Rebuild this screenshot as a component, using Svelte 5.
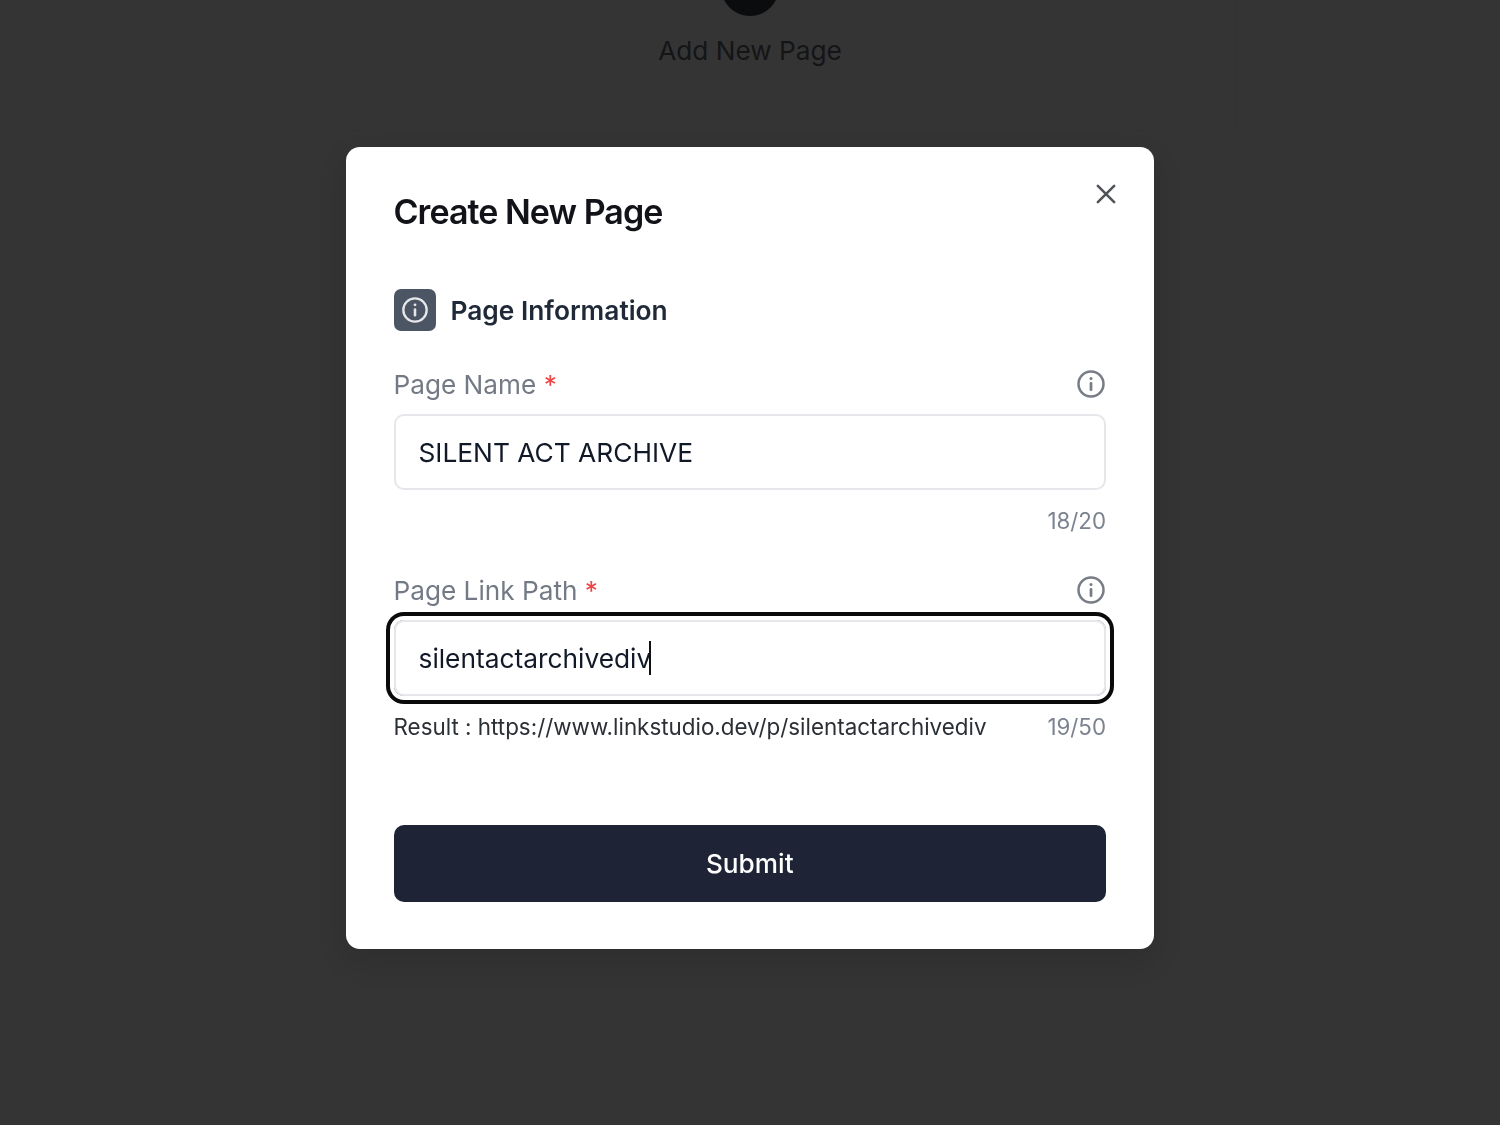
<script>
    const fields = [
        { label: 'Page Name', value: 'SILENT ACT ARCHIVE', count: '18/20', focused: false, result: '' },
        { label: 'Page Link Path', value: 'silentactarchivediv', count: '19/50', focused: true, result: 'Result : https://www.linkstudio.dev/p/silentactarchivediv' }
    ];
</script>

<div class="page">
    <div class="panel">
        <div class="add-circle"></div>
        <span class="add-label">Add New Page</span>
    </div>
</div>

<div class="overlay">
    <div class="modal">
        <button class="close" aria-label="Close">
            <svg viewBox="0 0 24 24" width="28" height="28" fill="none" stroke="currentColor" stroke-width="2.2" stroke-linecap="round">
                <path d="M5 5l14 14M19 5L5 19" />
            </svg>
        </button>

        <h2>Create New Page</h2>

        <div class="section">
            <span class="section-icon">
                <svg viewBox="0 0 24 24" width="28" height="28" fill="none" stroke="currentColor" stroke-width="2" stroke-linecap="round">
                    <circle cx="12" cy="12" r="10" />
                    <path d="M12 11.5v5" stroke-width="2.2" />
                    <circle cx="12" cy="7.6" r="1.2" fill="currentColor" stroke="none" />
                </svg>
            </span>
            <h3>Page Information</h3>
        </div>

        {#each fields as field}
            <div class="field">
                <div class="label-row">
                    <span class="label">{field.label} <span class="req">*</span></span>
                    <svg class="hint" viewBox="0 0 24 24" width="30" height="30" fill="none" stroke="currentColor" stroke-width="2" stroke-linecap="round">
                        <circle cx="12" cy="12" r="10" />
                        <path d="M12 11.5v5" stroke-width="2.2" />
                        <circle cx="12" cy="7.6" r="1.2" fill="currentColor" stroke="none" />
                    </svg>
                </div>
                <div class="input" class:focused={field.focused}>
                    {field.value}{#if field.focused}<span class="caret"></span>{/if}
                </div>
                <div class="meta">
                    <span class="result">{field.result}</span>
                    <span class="count">{field.count}</span>
                </div>
            </div>
        {/each}

        <button class="submit">Submit</button>
    </div>
</div>

<style>
    :global(body) {
        margin: 0;
        background: #343434;
        font-family: Inter, "Liberation Sans", sans-serif;
    }

    .page {
        height: 1125px;
        background: #343434;
        overflow: hidden;
    }

    .panel {
        width: 970px;
        height: 130px;
        margin: 0 auto;
        display: flex;
        flex-direction: column;
        align-items: center;
        box-shadow: 0 0 3px rgba(0, 0, 0, 0.05);
    }

    .add-circle {
        width: 58px;
        height: 58px;
        margin-top: -42px;
        border-radius: 50%;
        background: #0b0c0e;
        flex-shrink: 0;
    }

    .add-label {
        margin-top: 19px;
        font-size: 26.2px;
        line-height: 32px;
        color: #141517;
    }

    .overlay {
        position: fixed;
        inset: 0;
        display: flex;
        justify-content: center;
        align-items: flex-start;
    }

    .modal {
        position: relative;
        box-sizing: border-box;
        width: 808px;
        height: 802px;
        margin-top: 147px;
        padding: 47px 48px 47px 47.5px;
        background: #fff;
        border-radius: 14px;
        box-shadow: 0 12px 30px rgba(0, 0, 0, 0.12);
        display: flex;
        flex-direction: column;
    }

    .close {
        position: absolute;
        top: 33px;
        right: 34px;
        padding: 0;
        border: 0;
        background: none;
        color: #505459;
        display: flex;
    }

    h2 {
        margin: 0;
        font-size: 34px;
        line-height: 36px;
        font-weight: 600;
        letter-spacing: -0.95px;
        color: #111318;
    }

    .section {
        display: flex;
        align-items: center;
        gap: 15px;
        margin-top: 59px;
    }

    .section-icon {
        width: 42px;
        height: 42px;
        border-radius: 7px;
        background: #4b5563;
        color: #e5e7eb;
        display: flex;
        align-items: center;
        justify-content: center;
    }

    h3 {
        margin: 2px 0 0;
        font-size: 26.3px;
        line-height: 40px;
        font-weight: 600;
        color: #1f2937;
    }

    .field {
        display: flex;
        flex-direction: column;
    }

    .section + .field {
        margin-top: 19px;
    }

    .field + .field {
        margin-top: 20px;
    }

    .label-row {
        height: 50px;
        display: flex;
        align-items: center;
        justify-content: space-between;
        margin-top: 9px;
        margin-bottom: 5px;
    }

    .label {
        font-size: 26.2px;
        color: #747a85;
    }

    .req {
        color: #ef4444;
    }

    .hint {
        color: #777c85;
    }

    .input {
        box-sizing: border-box;
        height: 76px;
        padding: 0 23px;
        display: flex;
        align-items: center;
        border: 2px solid #e5e7eb;
        border-radius: 10px;
        font-size: 26.3px;
        color: #111827;
    }

    .input.focused {
        box-shadow: 0 0 0 4px #fff, 0 0 0 8px #0a0a0a;
    }

    .caret {
        width: 2px;
        height: 34px;
        margin-left: -2px;
        background: #111;
    }

    .meta {
        display: flex;
        justify-content: space-between;
        align-items: center;
        height: 31px;
        margin-top: 15px;
    }

    .result {
        font-size: 22.4px;
        color: #2b2f36;
    }

    .count {
        font-size: 22.3px;
        color: #7b8290;
    }

    .submit {
        height: 77px;
        margin-top: auto;
        border: 0;
        border-radius: 10px;
        background: #1e2435;
        color: #fff;
        font-family: inherit;
        font-size: 26.2px;
        font-weight: 500;
    }
</style>
